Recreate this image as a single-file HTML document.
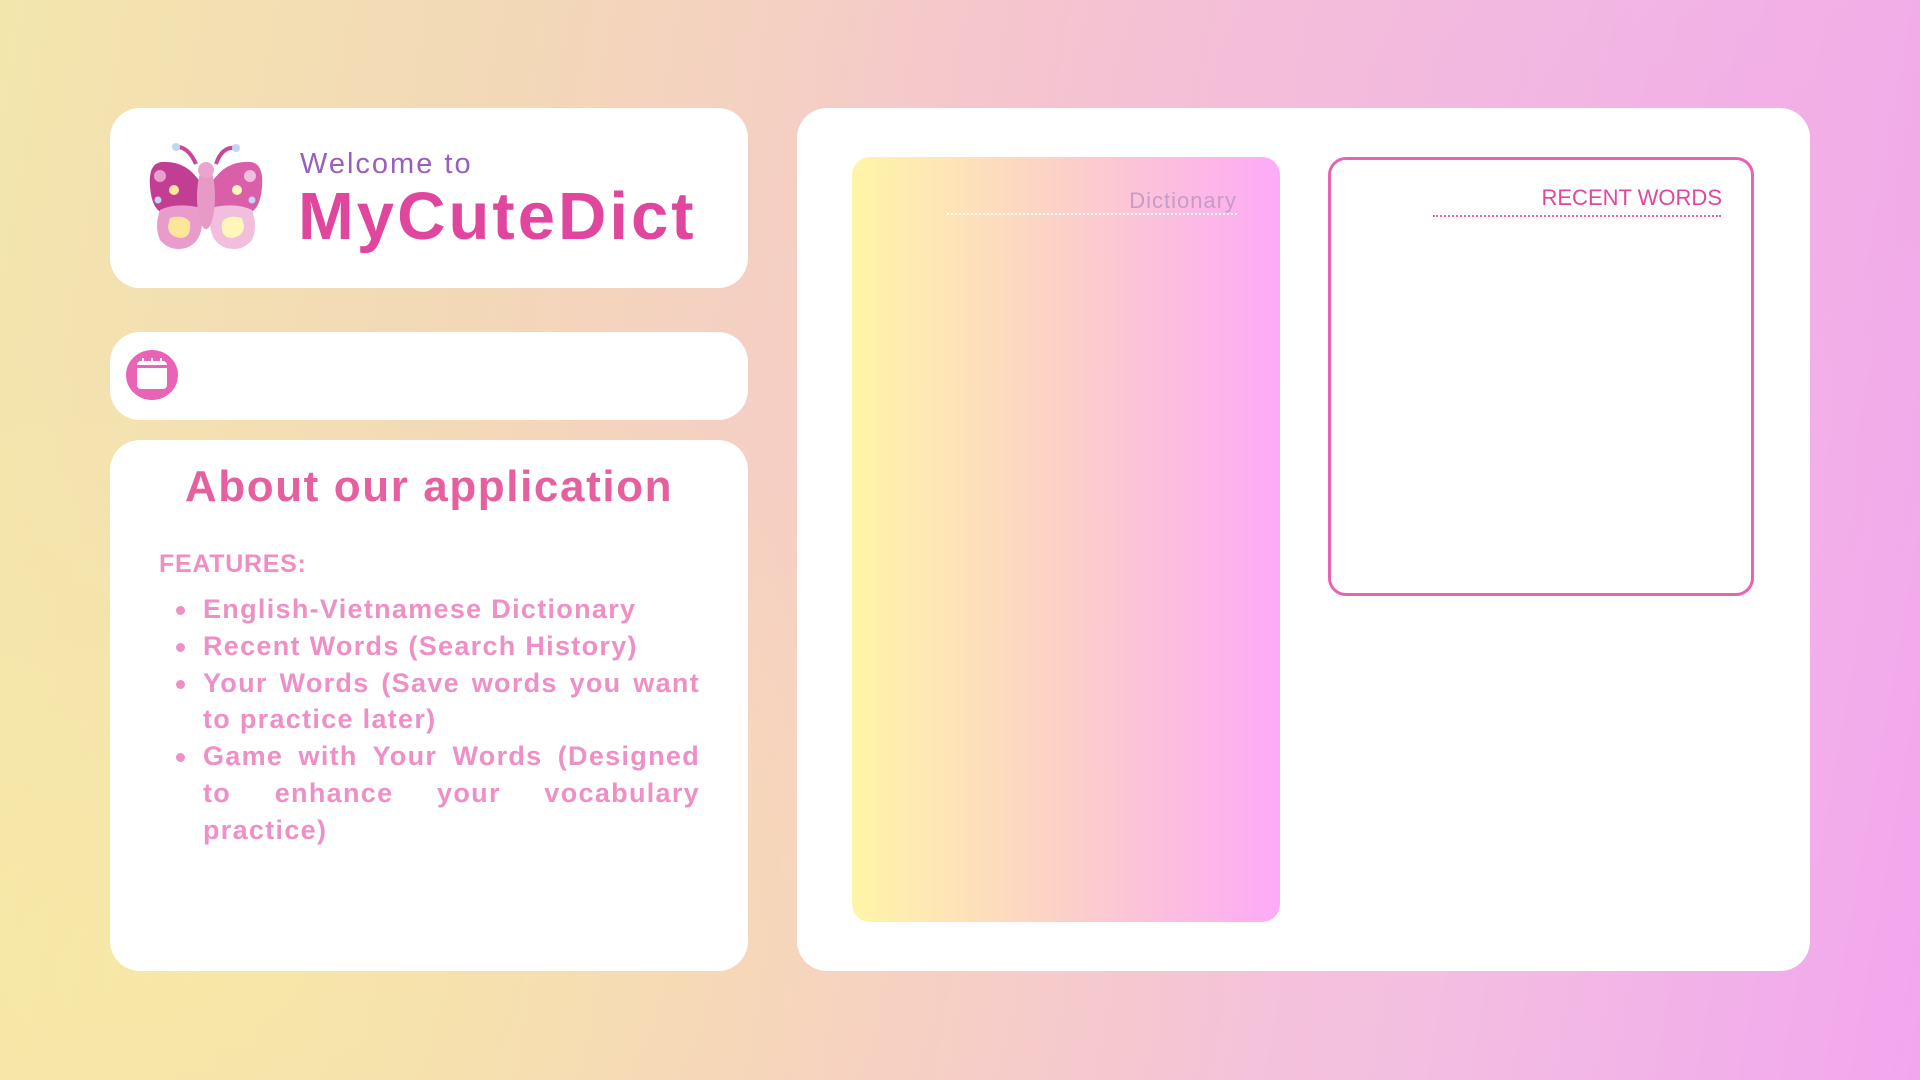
<!DOCTYPE html>
<html><head><meta charset="utf-8"><style>
*{margin:0;padding:0;box-sizing:border-box}
body{width:1920px;height:1080px;overflow:hidden;font-family:"Liberation Sans",sans-serif;position:relative;
background:linear-gradient(100deg,#f3e6ad 0%,#f3d8b8 25%,#f6c8cc 50%,#f3bfe0 75%,#f2a6ee 100%);}
.bg2{position:absolute;inset:0;background:radial-gradient(ellipse at 10% 90%,rgba(248,236,160,.7),transparent 45%),radial-gradient(ellipse at 90% 10%,rgba(240,170,230,.5),transparent 40%)}
.card{position:absolute;background:#fff;border-radius:30px}
</style></head><body>
<div class="bg2"></div>
<div class="card" style="left:110px;top:108px;width:638px;height:180px"></div>
<svg style="position:absolute;left:146px;top:142px" width="128" height="112" viewBox="0 0 128 112">
<path d="M50 22 Q42 4 30 5" stroke="#c8479a" stroke-width="4" fill="none"/>
<path d="M70 22 Q76 4 90 6" stroke="#c8479a" stroke-width="4" fill="none"/>
<circle cx="30" cy="5" r="4" fill="#c4d4f4"/><circle cx="90" cy="6" r="4" fill="#c4d4f4"/>
<path d="M54 40 Q40 18 15 20 Q2 22 4 45 Q6 70 20 72 L55 68 Z" fill="#c23e92"/>
<path d="M66 40 Q80 18 105 20 Q118 22 116 45 Q114 70 100 72 L65 68 Z" fill="#d95fa8"/>
<path d="M56 66 Q30 60 14 68 Q8 85 14 98 Q24 110 40 106 Q56 100 56 80 Z" fill="#e99ccb"/>
<path d="M64 66 Q90 60 106 68 Q112 85 106 98 Q96 110 80 106 Q64 100 64 80 Z" fill="#f1bedd"/>
<path d="M24 76 Q38 72 44 80 Q46 96 34 96 Q22 94 22 84 Z" fill="#fde59a"/>
<path d="M96 76 Q82 72 76 80 Q74 96 86 96 Q98 94 98 84 Z" fill="#fff6b8"/>
<ellipse cx="60" cy="55" rx="9" ry="32" fill="#e79ac6"/>
<ellipse cx="60" cy="28" rx="8" ry="8" fill="#eaa5cf"/>
<circle cx="14" cy="34" r="6" fill="#e8a0cc"/><circle cx="28" cy="48" r="5" fill="#fde59a"/><circle cx="12" cy="58" r="3.5" fill="#c4d4f4"/>
<circle cx="104" cy="34" r="6" fill="#f1bedd"/><circle cx="91" cy="48" r="5" fill="#fff6b8"/><circle cx="106" cy="58" r="3.5" fill="#c4d4f4"/>
</svg>
<div style="position:absolute;left:300px;top:148px;font-size:29px;color:#9a5fbd;letter-spacing:2px">Welcome to</div>
<div style="position:absolute;left:298px;top:178px;font-size:67px;font-weight:bold;color:#e0469e;letter-spacing:3px">MyCuteDict</div>
<div class="card" style="left:110px;top:332px;width:638px;height:88px"></div>
<svg style="position:absolute;left:125px;top:349px" width="54" height="52" viewBox="0 0 54 52">
<ellipse cx="27" cy="26" rx="26" ry="25" fill="#e964b6"/>
<rect x="12" y="12" width="30" height="28" rx="4" fill="#fff"/>
<rect x="12" y="16" width="30" height="3" fill="#e964b6"/>
<rect x="17" y="9" width="2" height="7" fill="#fff"/><rect x="26" y="9" width="2" height="7" fill="#fff"/><rect x="35" y="9" width="2" height="7" fill="#fff"/>
</svg>
<div class="card" style="left:110px;top:440px;width:638px;height:531px"></div>
<div style="position:absolute;left:110px;width:638px;top:462px;text-align:center;font-size:44px;font-weight:bold;color:#e6609f;letter-spacing:1.6px">About our application</div>
<div style="position:absolute;left:159px;top:550px;font-size:25px;font-weight:bold;color:#ee8fc2;letter-spacing:0.7px">FEATURES:</div>
<ul style="position:absolute;left:203px;top:591px;width:497px;font-size:27px;font-weight:bold;color:#ee8fc5;line-height:36.8px;text-align:justify;list-style:none;letter-spacing:1.3px">
<li>English-Vietnamese Dictionary</li>
<li>Recent Words (Search History)</li>
<li>Your Words (Save words you want to practice later)</li>
<li>Game with Your Words (Designed to enhance your vocabulary practice)</li>
</ul>
<div style="position:absolute;left:176px;top:606px;width:9px;height:9px;border-radius:50%;background:#ee8fc5"></div>
<div style="position:absolute;left:176px;top:643px;width:9px;height:9px;border-radius:50%;background:#ee8fc5"></div>
<div style="position:absolute;left:176px;top:680px;width:9px;height:9px;border-radius:50%;background:#ee8fc5"></div>
<div style="position:absolute;left:176px;top:753px;width:9px;height:9px;border-radius:50%;background:#ee8fc5"></div>
<div class="card" style="left:797px;top:108px;width:1013px;height:863px"></div>
<div style="position:absolute;left:852px;top:157px;width:428px;height:765px;border-radius:18px;background:linear-gradient(90deg,#fff5a8,#fcd0c8 50%,#fdaaf8)"></div>
<div style="position:absolute;right:683px;top:188px;font-size:22px;color:#c79bc8;letter-spacing:1px">Dictionary</div>
<div style="position:absolute;left:947px;top:213px;width:290px;border-top:2px dotted #fff"></div>
<div style="position:absolute;left:1328px;top:157px;width:426px;height:439px;border:3.5px solid #e862b4;border-radius:18px;background:#fff"></div>
<div style="position:absolute;right:198px;top:185px;font-size:22px;color:#e0469e">RECENT WORDS</div>
<div style="position:absolute;left:1433px;top:215px;width:288px;border-top:2px dotted #e862b4"></div>
</body></html>
